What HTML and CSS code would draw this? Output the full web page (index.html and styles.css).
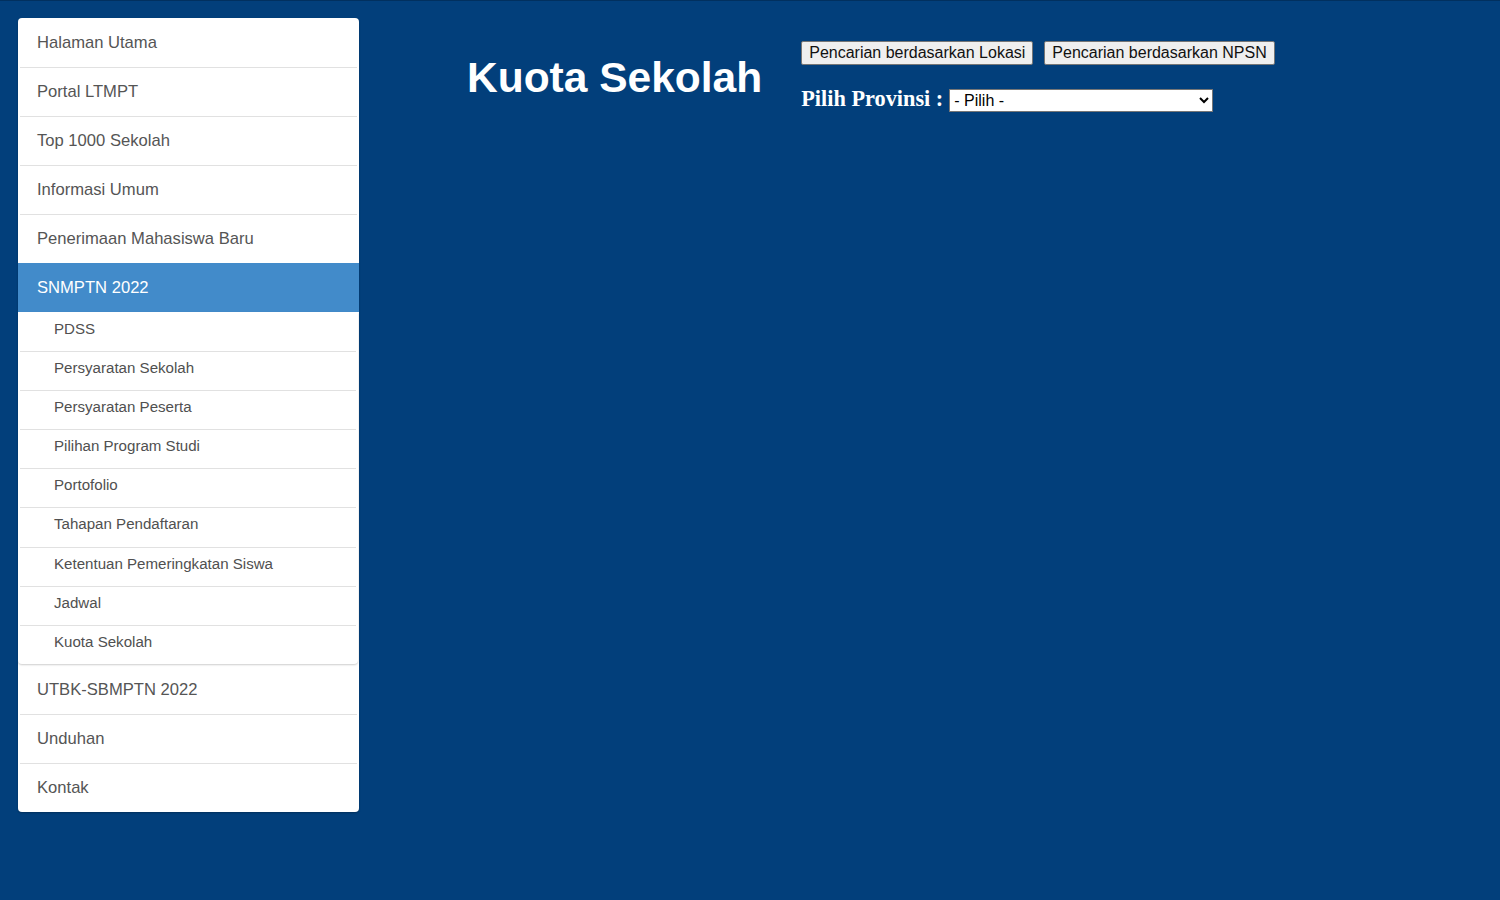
FILE: index.html
```html
<!DOCTYPE html>
<html lang="id">
<head>
<meta charset="utf-8">
<title>Kuota Sekolah</title>
<link rel="stylesheet" href="styles.css">
</head>
<body>
<div class="page">
  <nav class="sidebar">
    <a class="item" href="#">Halaman Utama</a>
    <a class="item" href="#">Portal LTMPT</a>
    <a class="item" href="#">Top 1000 Sekolah</a>
    <a class="item" href="#">Informasi Umum</a>
    <a class="item" href="#">Penerimaan Mahasiswa Baru</a>
    <a class="item active" href="#">SNMPTN 2022</a>
    <div class="sub">
      <a class="subitem first" href="#">PDSS</a>
      <a class="subitem" href="#">Persyaratan Sekolah</a>
      <a class="subitem" href="#">Persyaratan Peserta</a>
      <a class="subitem" href="#">Pilihan Program Studi</a>
      <a class="subitem" href="#">Portofolio</a>
      <a class="subitem" href="#">Tahapan Pendaftaran</a>
      <a class="subitem" href="#">Ketentuan Pemeringkatan Siswa</a>
      <a class="subitem" href="#">Jadwal</a>
      <a class="subitem" href="#">Kuota Sekolah</a>
    </div>
    <a class="item first" href="#">UTBK-SBMPTN 2022</a>
    <a class="item" href="#">Unduhan</a>
    <a class="item" href="#">Kontak</a>
  </nav>
  <h1 class="title">Kuota Sekolah</h1>
  <section class="search">
    <div class="buttons">
      <button class="btn" type="button">Pencarian berdasarkan Lokasi</button>
      <button class="btn" type="button">Pencarian berdasarkan NPSN</button>
    </div>
    <div class="prov">
      <label class="prov-label" for="prov">Pilih Provinsi :</label>
      <select class="prov-select" id="prov">
        <option>- Pilih -</option>
      </select>
    </div>
  </section>
</div>
</body>
</html>
```

FILE: styles.css
```css
html, body {
  margin: 0;
  padding: 0;
}
body {
  background: #023f7b;
  border-top: 1px solid #01305f;
  min-height: 899px;
  font-family: "Liberation Sans", Arial, sans-serif;
}
.page {
  display: flex;
  align-items: flex-start;
  padding: 17px 18px 18px 18px;
}
.sidebar {
  width: 341px;
  flex: none;
  background: #fff;
  border-radius: 4px;
  box-shadow: 0 1px 2px rgba(0, 0, 0, 0.25);
  display: flex;
  flex-direction: column;
  overflow: hidden;
}
.item {
  display: block;
  box-sizing: border-box;
  height: 49px;
  padding: 13px 18px 0 19px;
  font-size: 16.6px;
  line-height: 24px;
  color: #555;
  text-decoration: none;
  background: linear-gradient(#e1e1e1, #e1e1e1) no-repeat 2px 0 / calc(100% - 4px) 1px;
}
.item:first-child,
.item.first {
  background: none;
}
.item.active {
  background: #428bca;
  color: #fff;
}
.sub {
  background: #fff;
  border-radius: 0 0 4px 4px;
  box-shadow: 0 1px 2px rgba(0, 0, 0, 0.2);
  margin: 0 1px 1px 0;
}
.subitem {
  display: block;
  box-sizing: border-box;
  height: 39.1px;
  padding: 6px 18px 0 36px;
  font-size: 15.1px;
  line-height: 22px;
  color: #505050;
  text-decoration: none;
  background: linear-gradient(#e1e1e1, #e1e1e1) no-repeat 2px 0 / calc(100% - 4px) 1px;
}
.subitem.first {
  background: none;
}
.title {
  margin: 36px 0 0 108px;
  font-family: "Liberation Sans", Arial, sans-serif;
  font-weight: bold;
  font-size: 42.5px;
  line-height: 48px;
  color: #fff;
  white-space: nowrap;
}
.search {
  margin: 23px 0 0 39px;
}
.buttons {
  display: flex;
  gap: 11px;
}
.btn {
  font-family: "Liberation Sans", Arial, sans-serif;
  font-size: 16px;
  line-height: 18px;
  padding: 2px 7px;
  height: 24px;
  color: #111;
  background: #efefef;
  border: 1px solid #767676;
  border-radius: 2px;
  margin: 0;
}
.prov {
  display: flex;
  align-items: baseline;
  margin-top: 21px;
}
.prov-label {
  font-family: "Liberation Serif", "Times New Roman", serif;
  font-weight: bold;
  font-size: 22.3px;
  color: #fff;
  margin-right: 6px;
}
.prov-select {
  width: 264px;
  height: 23px;
  font-family: "Liberation Sans", Arial, sans-serif;
  font-size: 16px;
  color: #000;
  background: #fff;
  border: 1px solid #767676;
  border-radius: 0;
  padding: 0;
  margin: 0;
}
```
